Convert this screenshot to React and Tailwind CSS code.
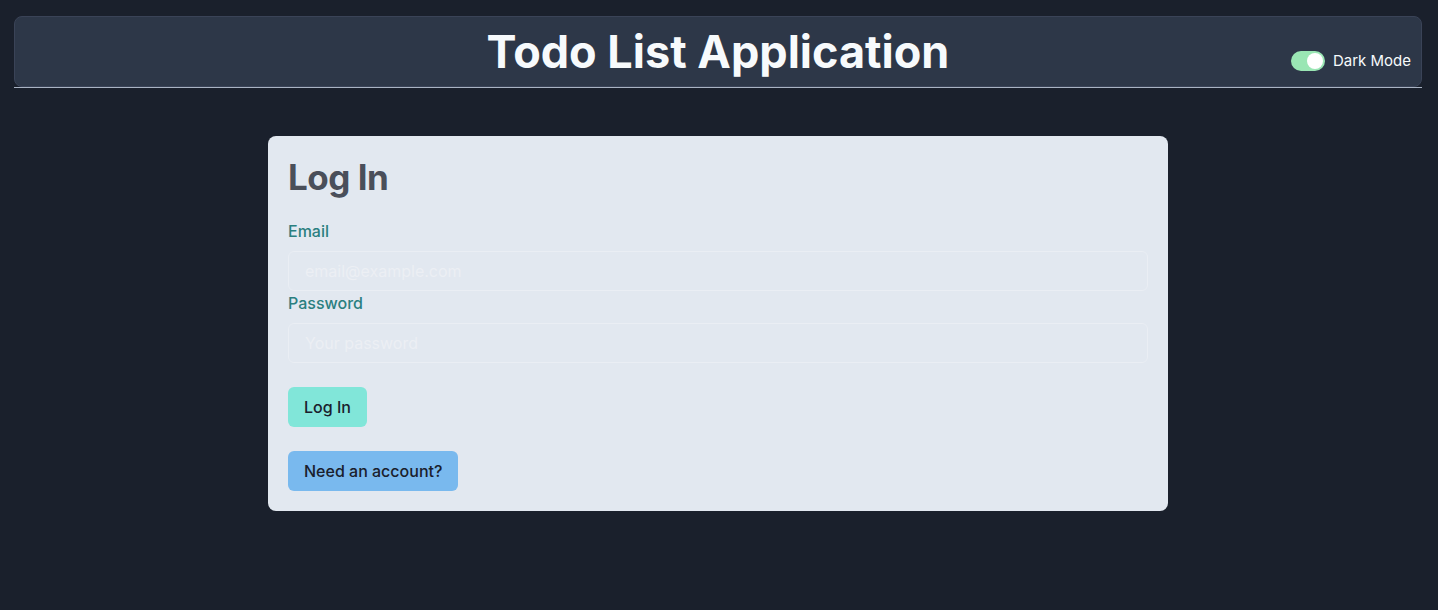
import React, { useState } from 'react';

const Toggle = ({ on, onChange }) => (
    <button
        type="button"
        onClick={onChange}
        className={`relative flex items-center w-[34px] h-[20px] rounded-full p-[2px] ${on ? 'bg-[#9ae6b4]' : 'bg-[#718096]'}`}
    >
        <span className={`block w-[16px] h-[16px] rounded-full bg-white ${on ? 'translate-x-[14px]' : ''}`} />
    </button>
);

const Field = ({ label, type, placeholder }) => (
    <div className="flex flex-col">
        <label className="text-[16px] leading-6 font-medium text-[#2a7f80] mb-2">{label}</label>
        <input
            type={type}
            placeholder={placeholder}
            className="h-[40px] w-full px-4 rounded-md border border-[#eaeef4] bg-transparent text-[16px] text-gray-800 placeholder-[#eceff4] outline-none"
        />
    </div>
);

export default function App() {
    const [dark, setDark] = useState(true);

    return (
        <div className="min-h-[610px] bg-[#1a202c] font-['Inter',sans-serif] pt-4 pl-[14px] pr-[16px]">
            <header className="grid grid-cols-[1fr_auto_1fr] h-[71px] rounded-lg bg-[#2d3748] border border-[#3a4357]">
                <div />
                <h1 className="self-center text-[45px] leading-none font-bold text-[#f7fafc]">
                    Todo List Application
                </h1>
                <div className="flex items-end justify-end pr-[10px] pb-[13px]">
                    <div className="flex items-center gap-[8px]">
                        <Toggle on={dark} onChange={() => setDark(!dark)} />
                        <span className="text-[15px] leading-6 text-[#f7fafc]">Dark Mode</span>
                    </div>
                </div>
            </header>
            <div className="h-px bg-[#a9b3c3]" />

            <main className="flex justify-center pt-12">
                <div className="w-[900px] rounded-lg bg-[#e2e8f0] p-5">
                    <h2 className="text-[35px] leading-[43px] font-bold tracking-[-0.5px] text-[#4a4f5a] mb-[20px]">Log In</h2>
                    <div className="flex flex-col">
                        <Field label="Email" type="email" placeholder="email@example.com" />
                        <Field label="Password" type="password" placeholder="Your password" />
                    </div>
                    <div className="flex flex-col items-start gap-6 mt-6">
                        <button className="h-[40px] px-4 rounded-md bg-[#81e6d9] text-[16px] font-medium text-[#1a202c]">
                            Log In
                        </button>
                        <button className="h-[40px] px-4 rounded-md bg-[#79b9ee] text-[16px] font-medium text-[#1a202c]">
                            Need an account?
                        </button>
                    </div>
                </div>
            </main>
        </div>
    );
}
